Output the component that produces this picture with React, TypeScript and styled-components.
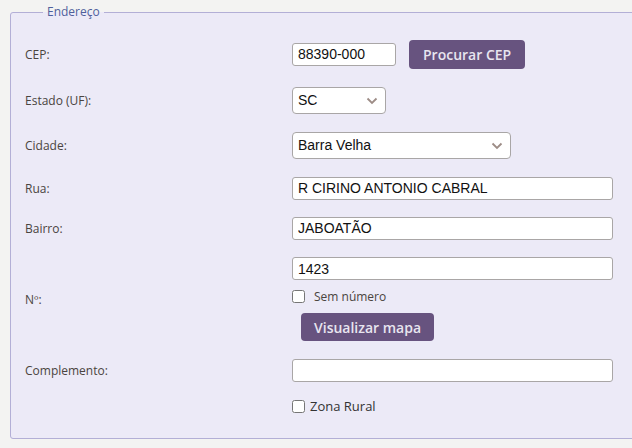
import React from "react";
import styled, { createGlobalStyle } from "styled-components";

const Global = createGlobalStyle`
  html, body { margin: 0; padding: 0; background: #f3f3f2; overflow: hidden; }
  body { width: 632px; height: 448px; font-family: "Open Sans", "Noto Sans", sans-serif; }
`;

const Page = styled.div`
  padding: 4px 0 0 10px;
  width: 622px;
  height: 444px;
  overflow: hidden;
`;

const Fieldset = styled.fieldset`
  margin: 0;
  width: 640px;
  box-sizing: border-box;
  border: 1px solid #b3afd6;
  border-radius: 3px;
  background: #eceaf7;
  padding: 18px 0 24px 14px;
`;

const Legend = styled.legend`
  margin-left: 18px;
  padding: 0 4px;
  font-size: 12px;
  line-height: 16px;
  color: #4f5f9c;
`;

const Rows = styled.div`
  display: flex;
  flex-direction: column;
  gap: 16px;
`;

const Row = styled.div<{ $h: number }>`
  display: flex;
  align-items: center;
  height: ${(p) => p.$h}px;
`;

const Label = styled.label`
  width: 267px;
  flex: none;
  font-size: 12px;
  color: #4a4440;
`;

const Field = styled.div`
  display: flex;
  align-items: center;
  gap: 13px;
`;

const Stack = styled.div`
  display: flex;
  flex-direction: column;
  align-items: flex-start;
`;

const Input = styled.input<{ $w: number }>`
  box-sizing: border-box;
  width: ${(p) => p.$w}px;
  height: 23px;
  border: 1px solid #a9a6a6;
  border-radius: 3px;
  background: #fff;
  font-family: "Liberation Sans", Arial, sans-serif;
  font-size: 14px;
  color: #111;
  padding: 0 5px;
  margin: 0;
  outline: none;
`;

const SelectWrap = styled.div<{ $w: number }>`
  position: relative;
  width: ${(p) => p.$w}px;
  height: 27px;
`;

const Select = styled.select`
  appearance: none;
  box-sizing: border-box;
  width: 100%;
  height: 100%;
  border: 1px solid #a9a6a6;
  border-radius: 4px;
  background: #fff;
  font-family: "Liberation Sans", Arial, sans-serif;
  font-size: 14px;
  color: #111;
  padding: 0 5px;
  margin: 0;
  outline: none;
`;

const Chevron = styled.svg`
  position: absolute;
  right: 8px;
  top: 10px;
  pointer-events: none;
`;

const Button = styled.button`
  box-sizing: border-box;
  height: 29px;
  border: none;
  border-radius: 4px;
  background: #67537f;
  color: #e8e5ef;
  font-family: "Open Sans", "Noto Sans", sans-serif;
  font-weight: 600;
  font-size: 14px;
  padding: 0 14px;
  margin: 0;
`;

const MapButton = styled(Button)`
  margin-left: 9px;
  height: 28px;
  padding: 0 13px;
`;

const Check = styled.label<{ $size: number; $gap: number; $color: string }>`
  display: flex;
  align-items: center;
  gap: ${(p) => p.$gap}px;
  font-size: ${(p) => p.$size}px;
  color: ${(p) => p.$color};
  input {
    margin: 0;
    width: 13px;
    height: 13px;
  }
`;

const CheckRow = styled.div`
  margin: 8px 0 8px;
`;

const Arrow = () => (
  <Chevron width="12" height="8" viewBox="0 0 12 8">
    <path d="M1.5 1.5 L6 6 L10.5 1.5" fill="none" stroke="#9d8c86" strokeWidth="1.8" />
  </Chevron>
);

export default function App() {
  return (
    <Page>
      <Global />
      <Fieldset>
        <Legend>Endereço</Legend>
        <Rows>
          <Row $h={32}>
            <Label>CEP:</Label>
            <Field>
              <Input $w={104} defaultValue="88390-000" />
              <Button>Procurar CEP</Button>
            </Field>
          </Row>
          <Row $h={28}>
            <Label>Estado (UF):</Label>
            <SelectWrap $w={94}>
              <Select defaultValue="SC">
                <option value="SC">SC</option>
              </Select>
              <Arrow />
            </SelectWrap>
          </Row>
          <Row $h={30}>
            <Label>Cidade:</Label>
            <SelectWrap $w={219}>
              <Select defaultValue="Barra Velha">
                <option value="Barra Velha">Barra Velha</option>
              </Select>
              <Arrow />
            </SelectWrap>
          </Row>
          <Row $h={24}>
            <Label>Rua:</Label>
            <Input $w={321} defaultValue="R CIRINO ANTONIO CABRAL" />
          </Row>
          <Row $h={24}>
            <Label>Bairro:</Label>
            <Input $w={321} defaultValue="JABOATÃO" />
          </Row>
          <Row $h={86}>
            <Label>Nº:</Label>
            <Stack>
              <Input $w={321} defaultValue="1423" />
              <CheckRow>
                <Check $size={12} $gap={9} $color="#4a4440">
                  <input type="checkbox" />
                  Sem número
                </Check>
              </CheckRow>
              <MapButton>Visualizar mapa</MapButton>
            </Stack>
          </Row>
          <Row $h={24}>
            <Label>Complemento:</Label>
            <Input $w={321} defaultValue="" />
          </Row>
          <Row $h={16}>
            <Label />
            <Check $size={13} $gap={5} $color="#333">
              <input type="checkbox" />
              Zona Rural
            </Check>
          </Row>
        </Rows>
      </Fieldset>
    </Page>
  );
}
